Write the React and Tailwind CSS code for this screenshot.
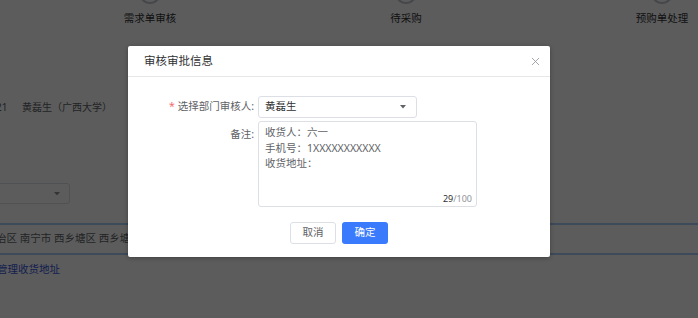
import { X } from "lucide-react";

const steps = ["需求单审核", "待采购", "预购单处理"];

function Caret({ className }) {
  return (
    <svg width="6" height="3.5" viewBox="0 0 6 3.5" className={className}>
      <path d="M0 0 L6 0 L3 3.5 Z" fill="currentColor" />
    </svg>
  );
}

export default function App() {
  return (
    <div className="relative w-[698px] h-[318px] overflow-hidden bg-white font-['Noto_Sans','Noto_Sans_CJK_SC',sans-serif]">
      {/* page behind the dialog */}
      <div className="flex pl-[22px]">
        {steps.map((s) => (
          <div key={s} className="w-[256px] shrink-0 flex flex-col items-center">
            <span className="mt-[-18px] w-[22px] h-[22px] rounded-full border-2 border-[#c0c4cc]" />
            <p className="mt-[7px] text-[10.5px] leading-[14px] text-[#303133]">{s}</p>
          </div>
        ))}
      </div>

      <div className="mt-[75px] flex items-center text-[10px] leading-[14px] text-[#606266]">
        <span className="ml-[-4px] w-[26px]">21</span>
        <span>黄磊生（广西大学）</span>
        <span className="ml-[19px]">1</span>
      </div>

      <div className="mt-[69px] ml-[-20px] w-[90px] h-[21px] border border-[#dcdfe6] rounded-[3px] flex items-center justify-end pr-[9px] text-[#909399]">
        <Caret />
      </div>

      <div className="mt-[19px] h-[32px] border-y-2 border-[#a6cdf5] flex items-center text-[10.5px] text-[#606266] whitespace-nowrap">
        <span className="ml-[-4px]">治区 南宁市 西乡塘区 西乡塘路</span>
      </div>

      <p className="mt-[7px] ml-[-3px] text-[10.5px] leading-[14px] text-[#3655d8]">管理收货地址</p>

      {/* overlay + dialog */}
      <div className="absolute inset-0 bg-black/[0.64] pl-[128px] pt-[46px]">
        <div className="w-[422px] bg-white rounded-[2px] shadow-[0_1px_4px_rgba(0,0,0,0.3)]">
          <div className="h-[31px] flex items-center justify-between pl-[16px] pr-[8px] border-b border-[#e8e8e8]">
            <h3 className="text-[11.5px] text-[#303133]">审核审批信息</h3>
            <X size={13} strokeWidth={1.5} className="text-[#909399]" />
          </div>

          <div className="pt-[19px] text-[10.5px]">
            <div className="flex items-center gap-[4px]">
              <label className="w-[126px] text-right text-[#606266]">
                <span className="text-[#f56c6c] mr-[3px]">*</span>选择部门审核人:
              </label>
              <div className="w-[159px] h-[22px] border border-[#dcdfe6] rounded-[3px] pl-[6px] pr-[10px] flex items-center justify-between text-[#303133]">
                <span>黄磊生</span>
                <Caret className="text-[#606266]" />
              </div>
            </div>

            <div className="mt-[3px] flex items-start gap-[4px]">
              <label className="w-[126px] text-right text-[#606266] pt-[6px]">备注:</label>
              <div className="relative w-[219px] h-[86px] border border-[#dcdfe6] rounded-[3px] pl-[6px] pt-[3px] text-[#606266] leading-[15.5px]">
                <p>收货人：六一</p>
                <p>手机号：1XXXXXXXXXXX</p>
                <p>收货地址：</p>
                <span className="absolute right-[4px] bottom-[0px] text-[9px] text-[#909399]">
                  <span className="text-[#303133]">29</span>/100
                </span>
              </div>
            </div>

            <div className="mt-[15px] pb-[13px] flex justify-center gap-[6px]">
              <button className="w-[46px] h-[22px] border border-[#dcdfe6] rounded-[3px] text-[#606266]">取消</button>
              <button className="w-[46px] h-[22px] rounded-[3px] bg-[#3a7bfd] text-white">确定</button>
            </div>
          </div>
        </div>
      </div>
    </div>
  );
}
